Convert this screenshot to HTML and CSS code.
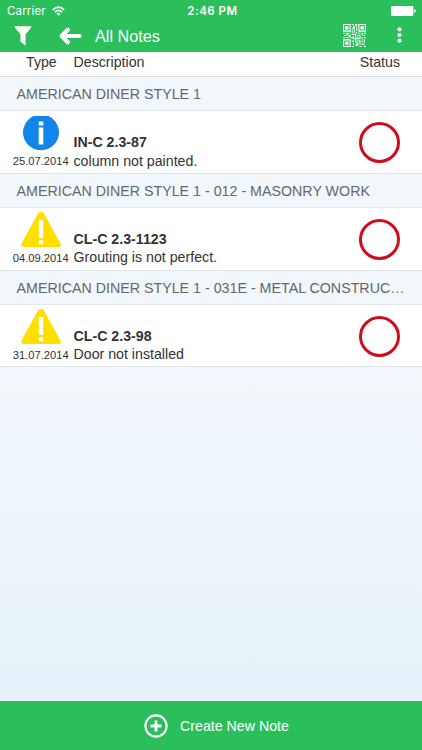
FILE: index.html
```
<!DOCTYPE html>
<html lang="en">
<head>
<meta charset="utf-8">
<title>All Notes</title>
<link rel="stylesheet" href="styles.css">
</head>
<body>
<div class="app">
  <header class="top">
    <div class="status-bar">
      <div class="carrier"><span class="carrier-name">Carrier</span>
        <svg class="wifi" viewBox="0 0 13 10" width="13" height="10"><g fill="none" stroke="#fff" stroke-width="1.6"><path d="M.8 3.9Q6.5-1.7 12.2 3.9"/><path d="M2.9 6.2Q6.5 2.6 10.1 6.2"/></g><path d="M4.4 7.5Q6.5 5.8 8.6 7.5L6.5 9.7Z" fill="#fff"/></svg>
      </div>
      <div class="clock">2:46 PM</div>
      <svg class="battery" viewBox="0 0 25 10" width="25" height="10"><rect width="22.3" height="10" rx="1.2" fill="#fff"/><path d="M23 3.2Q24.7 3.5 24.7 5T23 6.8Z" fill="#fff"/></svg>
    </div>
    <nav class="nav">
      <svg class="filter" viewBox="0 0 18 20" width="18" height="20"><path d="M.4.2H17.4Q17.2 1.8 16 3L11.6 8.2V19.5L6.4 15.8V8.2L2 3Q.6 1.8.4.2Z" fill="#fff"/></svg>
      <svg class="back" viewBox="0 0 23 18" width="23" height="18"><path d="M8.8 2.8 2.7 9 8.8 15.2M3.4 9H20.6" fill="none" stroke="#fff" stroke-width="4.2" stroke-linecap="round" stroke-linejoin="round"/></svg>
      <h1 class="title">All Notes</h1>
      <svg class="qr" viewBox="0 0 21 21" width="23" height="23"><g fill="none" stroke="#fff"><path d="M.5.5h6v6h-6zM14.5.5h6v6h-6zM.5 14.5h6v6h-6z"/></g><path fill="#fff" d="M2 2h3v3H2zM16 2h3v3h-3zM2 16h3v3H2zM8 0h2v1H8zM11 0h2v2h-2zM9 2h2v2H9zM12 3h1v3h-1zM8 4h2v1H8zM10 5h1v3h-1zM8 6h1v2H8zM12 7h1v2h-1zM0 8h2v1H0zM3 8h2v2H3zM6 8h1v1H6zM8 9h3v1H8zM14 8h2v1h-2zM17 8h1v2h-1zM19 8h2v1h-2zM1 10h2v1H1zM5 10h2v2H5zM11 9h1v3h-1zM13 10h3v1h-3zM18 10h2v1h-2zM0 12h2v1H0zM3 12h2v1H3zM7 12h2v1H7zM9 11h1v3H9zM12 12h2v2h-2zM15 11h1v2h-1zM17 12h1v2h-1zM19 12h2v1h-2zM8 15h2v1H8zM10 13h2v1h-2zM11 14h1v3h-1zM13 15h3v1h-3zM14 13h2v1h-2zM17 15h1v2h-1zM19 14h1v3h-1zM9 17h1v2H9zM12 17h2v2h-2zM15 16h1v3h-1zM17 18h3v1h-3zM8 20h2v1H8zM11 19h3v1h-3zM15 20h2v1h-2zM19 20h2v1h-2z"/></svg>
      <svg class="more" viewBox="0 0 5 16" width="5" height="16"><g fill="#fff"><circle cx="2.5" cy="2.3" r="2.1"/><circle cx="2.5" cy="8" r="2.1"/><circle cx="2.5" cy="13.7" r="2.1"/></g></svg>
    </nav>
  </header>
  <div class="columns"><span class="col-type">Type</span><span class="col-desc">Description</span><span class="col-status">Status</span></div>
  <main class="list">
    <section class="group">
      <h2 class="group-title">AMERICAN DINER STYLE 1</h2>
      <article class="note">
        <div class="type">
          <svg viewBox="0 0 40 38" width="40" height="38"><path d="M12.5 2H27.5A18 18 0 1 1 12.5 2Z" fill="#1185e9"/><path d="M17.7 7.5h4.6v4h-4.6zM17.7 13.5h4.6v17h-4.6z" fill="#fff"/></svg>
          <time class="date">25.07.2014</time>
        </div>
        <div class="desc"><strong>IN-C 2.3-87</strong><span>column not painted.</span></div>
        <span class="ring"></span>
      </article>
    </section>
    <section class="group">
      <h2 class="group-title">AMERICAN DINER STYLE 1 - 012 - MASONRY WORK</h2>
      <article class="note">
        <div class="type">
          <svg viewBox="0 0 40 38" width="40" height="38"><path d="M19 3.2H21L37.8 33.8H2.2Z" fill="#ffdf00" stroke="#ffdf00" stroke-width="4.2" stroke-linejoin="round"/><path d="M17.8 9h4.4v18h-4.4zM17.8 29.3h4.4v4h-4.4z" fill="#fff"/></svg>
          <time class="date">04.09.2014</time>
        </div>
        <div class="desc"><strong>CL-C 2.3-1123</strong><span>Grouting is not perfect.</span></div>
        <span class="ring"></span>
      </article>
    </section>
    <section class="group">
      <h2 class="group-title">AMERICAN DINER STYLE 1 - 031E - METAL CONSTRUC…</h2>
      <article class="note">
        <div class="type">
          <svg viewBox="0 0 40 38" width="40" height="38"><path d="M19 3.2H21L37.8 33.8H2.2Z" fill="#ffdf00" stroke="#ffdf00" stroke-width="4.2" stroke-linejoin="round"/><path d="M17.8 9h4.4v18h-4.4zM17.8 29.3h4.4v4h-4.4z" fill="#fff"/></svg>
          <time class="date">31.07.2014</time>
        </div>
        <div class="desc"><strong>CL-C 2.3-98</strong><span>Door not installed</span></div>
        <span class="ring"></span>
      </article>
    </section>
  </main>
  <footer class="create">
    <svg viewBox="0 0 24 24" width="24" height="24"><g fill="none" stroke="#fff"><circle cx="12" cy="12" r="10.6" stroke-width="2.1"/><path d="M12 6.5v11M6.5 12h11" stroke-width="2.8"/></g></svg>
    <span>Create New Note</span>
  </footer>
</div>
</body>
</html>
```
FILE: styles.css
```
* { box-sizing: border-box; }
body { margin: 0; font-family: "Liberation Sans", Arial, sans-serif; color: #333; }
svg { display: block; flex: none; }
.app {
  width: 422px; height: 750px; display: flex; flex-direction: column; overflow: hidden;
  background: linear-gradient(#f2f7fc 49%, #edf5fb 68%, #e5f1f8 93%);
}
.top { height: 52px; background: #2abf5b; color: #fff; flex: none; }
.status-bar {
  height: 21px; padding: 0 6px 0 7px; display: grid; grid-template-columns: 1fr auto 1fr;
  align-items: center; font: 11.5px/21px Inter, sans-serif;
}
.carrier { display: flex; align-items: center; gap: 6px; }
.carrier-name { font-size: 11.5px; letter-spacing: .15px; padding-top: 1px; }
.clock { font-weight: 600; letter-spacing: .5px; padding: 1px 0 0 2px; }
.battery { justify-self: end; }
.nav { height: 31px; display: flex; align-items: center; padding: 0 20px 0 14px; }
.filter { margin-top: -2px; }
.back { margin-left: 27px; margin-top: -1px; }
.title { margin: 0 auto 0 13px; font-size: 16.2px; font-weight: 400; line-height: 31px; }
.qr { margin-top: -3px; }
.more { margin: -3px 0 0 31px; }
.columns {
  height: 25px; flex: none; display: grid; grid-template-columns: 73.5px 1fr auto;
  padding: 0 22px 0 0; font-size: 14.2px; line-height: 20px;
  background: #fff; border-bottom: 1px solid #dcdfe1;
}
.col-type { padding-left: 26px; }
.list { flex: 1; }
.group-title {
  margin: 0; height: 34px; padding-left: 16.5px; font-size: 14.25px; font-weight: 400;
  line-height: 34px; color: #63686c; background: #f2f7fc; border-bottom: 1px solid #e4e6e8;
  white-space: nowrap;
}
.note {
  height: 62.8px; display: grid; grid-template-columns: 73.5px 1fr auto; align-items: center;
  padding-right: 22px; background: #fff; border-bottom: 1px solid #e0e4e7;
}
.type { align-self: start; padding: 3px 0 0 8px; display: flex; flex-direction: column; align-items: center; }
.date { font-size: 11.2px; line-height: 18px; }
.desc { align-self: start; padding-top: 22px; display: flex; flex-direction: column; font-size: 14.2px; line-height: 18.5px; }
.ring { width: 41px; height: 41px; border: 3px solid #d00d1d; border-radius: 50%; margin-top: 2px; }
.create {
  height: 49px; flex: none; display: flex; align-items: center; justify-content: center; gap: 12px;
  padding-left: 11px; background: #2abf5b; color: #fff; font-size: 14.2px;
}
```
